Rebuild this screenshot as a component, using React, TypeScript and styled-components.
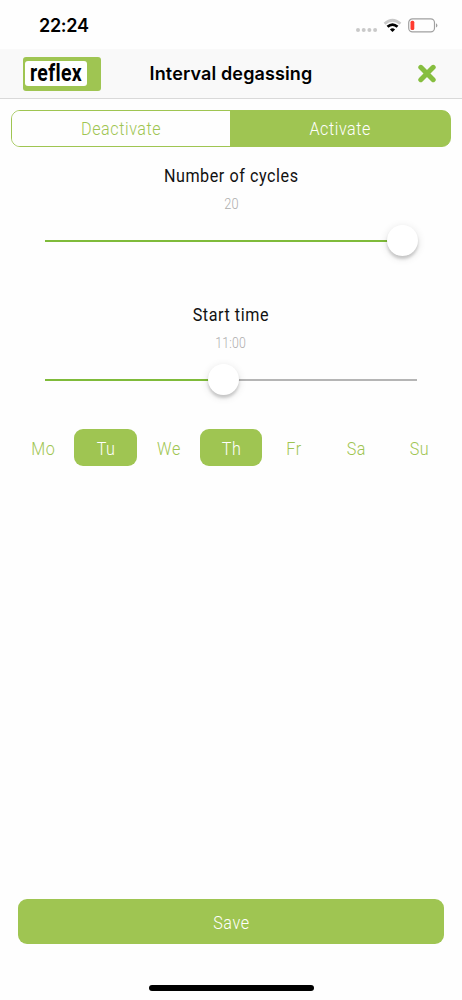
import React from "react";
import styled, { createGlobalStyle } from "styled-components";

const green = "#9fc552";

const Global = createGlobalStyle`
  * { box-sizing: border-box; }
  body { margin: 0; background: #fefefe; }
  button { font: inherit; border: 0; padding: 0; background: none; }
`;

const Screen = styled.main`
  width: 462px;
  height: 1000px;
  display: flex;
  flex-direction: column;
  background: #fefefe;
  font-family: Roboto, sans-serif;
  font-weight: 300;
  overflow: hidden;
`;

const Text = styled.span<{ $scale?: number; $spacing?: number }>`
  display: inline-block;
  white-space: nowrap;
  letter-spacing: ${(p) => p.$spacing ?? 0.65}px;
  margin-right: -${(p) => p.$spacing ?? 0.65}px;
  transform: scaleX(${(p) => p.$scale ?? 0.85});
`;

const StatusBar = styled.div`
  height: 49px;
  padding: 2px 24px 0 39px;
  display: flex;
  align-items: center;
  justify-content: space-between;
`;

const Clock = styled.div`
  font: 600 18px/22px Inter, sans-serif;
  letter-spacing: -0.3px;
  color: #000;
`;

const StatusIcons = styled.svg`
  display: block;
  width: 82px;
  height: 18px;
`;

const Header = styled.header`
  height: 50px;
  display: grid;
  grid-template-columns: 101px 1fr 101px;
  align-items: center;
  background: #f9f9f9;
  border-bottom: 1px solid #d9d9d9;
`;

const Logo = styled.div`
  width: 78.5px;
  height: 34px;
  margin-left: 22.5px;
  padding: 4px 0 0 2.5px;
  border-radius: 3px;
  background: ${green};
`;

const LogoPlate = styled.div`
  width: 62px;
  height: 25.5px;
  display: flex;
  align-items: center;
  justify-content: center;
  border-radius: 3px;
  background: #fff;
  color: #000;
  font: 700 24px/25px Roboto, sans-serif;
`;

const Title = styled.h1`
  margin: 0;
  text-align: center;
  font: 600 18px/24px Inter, sans-serif;
  letter-spacing: 0.13px;
  color: #000;
`;

const CloseButton = styled.button`
  justify-self: end;
  width: 20px;
  height: 20px;
  margin-right: 25px;
  svg { display: block; }
`;

const Segments = styled.div`
  height: 37px;
  margin: 10.5px 11px 0;
  display: grid;
  grid-template-columns: 218px 1fr;
  border: 1px solid ${green};
  border-radius: 9px;
  background: linear-gradient(to right, #fefefe 218px, ${green} 218px);
  overflow: hidden;
`;

const Segment = styled.button<{ $on?: boolean }>`
  font-size: 19px;
  line-height: 35px;
  color: ${(p) => (p.$on ? "#fff" : green)};
  background: ${(p) => (p.$on ? green : "#fefefe")};
`;

const Setting = styled.section`
  height: 139px;
  padding: 17px 45px 0;
  text-align: center;
`;

const Label = styled.h2`
  margin: 0;
  font-size: 19px;
  font-weight: 400;
  line-height: 24px;
  color: #111;
`;

const Value = styled.div`
  margin-top: 7px;
  font-size: 15px;
  line-height: 18px;
  color: #adadad;
`;

const Track = styled.div`
  position: relative;
  height: 2px;
  margin-top: 27.5px;
  background: #b5b5b5;
`;

const Fill = styled.div`
  height: 2px;
  background: #7fbb3a;
`;

const Thumb = styled.div`
  position: absolute;
  top: -15px;
  width: 31px;
  height: 31px;
  margin-left: -15.5px;
  border-radius: 50%;
  background: #fff;
  box-shadow: 0 3px 3px rgba(0, 0, 0, 0.16), 0 2px 9px rgba(0, 0, 0, 0.12);
`;

const Days = styled.div`
  margin: 4.5px 11.5px 0;
  display: grid;
  grid-template-columns: repeat(7, 1fr);
`;

const Day = styled.button<{ $on?: boolean }>`
  height: 37px;
  padding-top: 1px;
  border-radius: 9px;
  font-size: 19px;
  line-height: 35px;
  color: ${(p) => (p.$on ? "#fff" : green)};
  background: ${(p) => (p.$on ? green : "transparent")};
`;

const SaveButton = styled.button`
  height: 45px;
  margin: auto 18px 41px;
  padding-top: 2px;
  flex: none;
  border-radius: 9px;
  background: ${green};
  color: #fff;
  font-size: 19px;
`;

const HomeBar = styled.div`
  flex: none;
  width: 165px;
  height: 6px;
  margin: 0 auto 9px;
  border-radius: 3px;
  background: #000;
`;

function Slider({ at }: { at: number }) {
  return (
    <Track>
      <Fill style={{ width: `${at}%` }} />
      <Thumb style={{ left: `${at}%` }} />
    </Track>
  );
}

const days = [
  { name: "Mo" },
  { name: "Tu", on: true },
  { name: "We" },
  { name: "Th", on: true },
  { name: "Fr" },
  { name: "Sa" },
  { name: "Su" },
];

export default function App() {
  return (
    <Screen>
      <Global />
      <StatusBar>
        <Clock>22:24</Clock>
        <StatusIcons viewBox="0 0 82 18">
          <g fill="#c9c9c9">
            <circle cx="2" cy="13" r="2" />
            <circle cx="7.7" cy="13" r="2" />
            <circle cx="13.4" cy="13" r="2" />
            <circle cx="19.1" cy="13" r="2" />
          </g>
          <path d="M28.6 6.8Q36.5-.2 44.4 6.8" fill="none" stroke="#c9c9c9" strokeWidth="2.8" />
          <path d="M31.5 9.8Q36.5 5.4 41.5 9.8" fill="none" stroke="#000" strokeWidth="2.8" />
          <path d="M33.9 12.4Q36.5 10.2 39.1 12.4L36.5 15Z" fill="#000" />
          <rect x="52.7" y="1.9" width="25.8" height="13" rx="3.8" fill="none" stroke="#a0a0a0" strokeWidth="1.2" />
          <rect x="54.5" y="3.8" width="3.8" height="9.2" rx="1.5" fill="#ff3b30" />
          <path d="M80 6.2v4.4q1.4-.7 1.4-2.2T80 6.2z" fill="#a0a0a0" />
        </StatusIcons>
      </StatusBar>
      <Header>
        <Logo>
          <LogoPlate>
            <Text $scale={0.81} $spacing={0.4}>reflex</Text>
          </LogoPlate>
        </Logo>
        <Title>Interval degassing</Title>
        <CloseButton aria-label="Close">
          <svg width="20" height="20" viewBox="0 0 20 20">
            <path d="M3.8 3.3L16.2 15.7M16.2 3.3L3.8 15.7" stroke="#86be3f" strokeWidth="5" strokeLinecap="round" />
          </svg>
        </CloseButton>
      </Header>
      <Segments>
        <Segment><Text>Deactivate</Text></Segment>
        <Segment $on><Text>Activate</Text></Segment>
      </Segments>
      <Setting>
        <Label><Text>Number of cycles</Text></Label>
        <Value><Text $scale={0.85} $spacing={0.2}>20</Text></Value>
        <Slider at={96} />
      </Setting>
      <Setting>
        <Label><Text>Start time</Text></Label>
        <Value><Text $scale={0.82} $spacing={0.2}>11:00</Text></Value>
        <Slider at={48} />
      </Setting>
      <Days>
        {days.map((d) => (
          <Day key={d.name} $on={d.on}><Text>{d.name}</Text></Day>
        ))}
      </Days>
      <SaveButton><Text>Save</Text></SaveButton>
      <HomeBar />
    </Screen>
  );
}
